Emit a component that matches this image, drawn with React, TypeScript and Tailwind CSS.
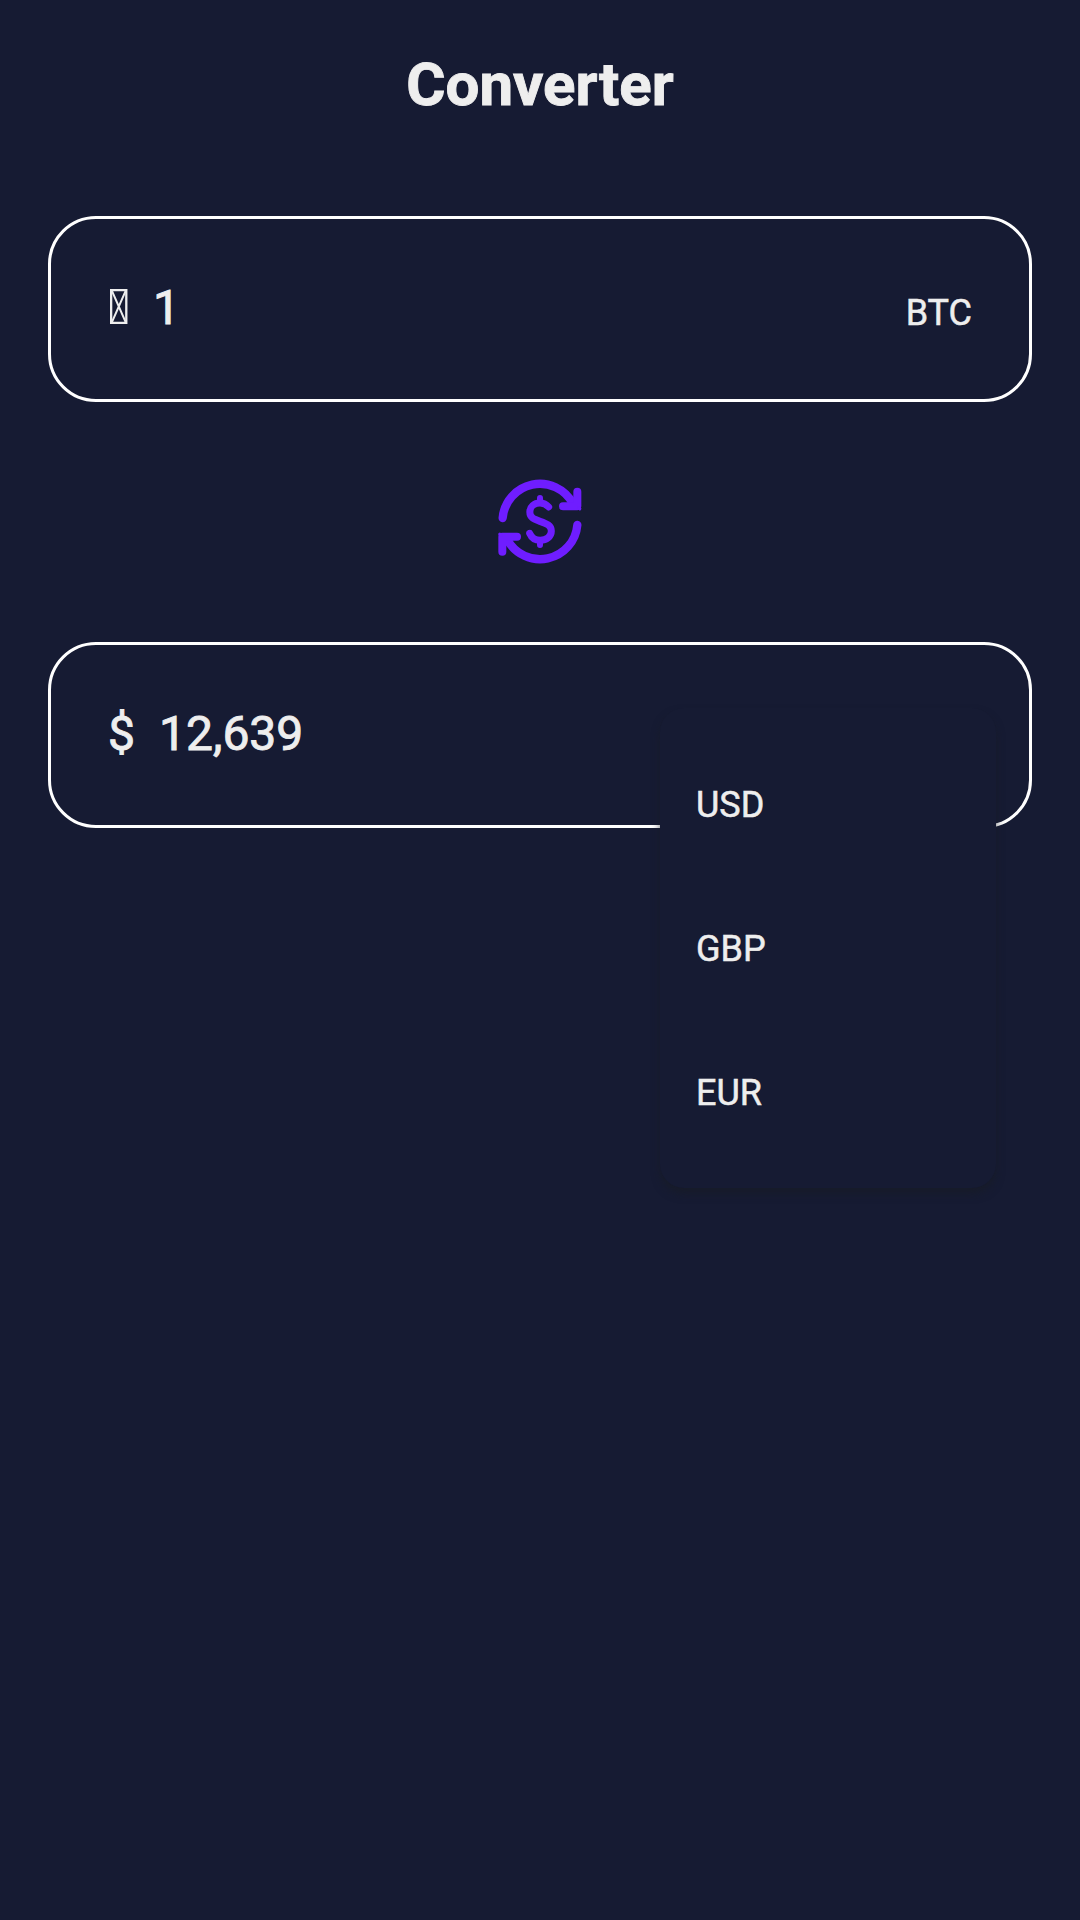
import React from "react";

const currencies = ["USD", "GBP", "EUR"];

function ConvertIcon() {
  return (
    <svg
      viewBox="0 0 360 330"
      className="-mt-[4px] h-[110px] w-[120px]"
      fill="none"
      stroke="#6f1dff"
      strokeLinecap="round"
      strokeLinejoin="round"
    >
      <g strokeWidth="25">
        <path d="M68 159A112 112 0 0 1 278 115" />
        <path d="M292 180A112 112 0 0 1 82 224" />
      </g>
      <g strokeWidth="24">
        <path d="M292 80V124H249" />
        <path d="M67 260V215H111" />
      </g>
      <path d="M296 128l3.5 3.5M63 211l-3.5 -3.5" strokeWidth="9" />
      <path
        d="M206 126C198 117 190 114 180 114C162 114 149.5 125 149.5 141C149.5 157 160 162 180 169C200 176 214 181 214 198C214 215 199 226 181 226C167 226 155 219 149 205"
        strokeWidth="21"
      />
      <path d="M180 99V112M180 228V240" strokeWidth="18" />
    </svg>
  );
}

function MissingGlyph() {
  return (
    <svg viewBox="0 0 18 35" className="h-[35px] w-[18px]" fill="none" stroke="#eeeeee">
      <path d="M1.15 1.15H16.3V33.85H1.15Z" strokeWidth="2.3" />
      <path d="M2 2L15.6 33M15.6 2L2 33" strokeWidth="1.9" />
    </svg>
  );
}

function Field({ children }: { children: React.ReactNode }) {
  return (
    <div className="relative flex h-[186px] items-center rounded-[48px] border-[3px] border-white px-[57px]">
      {children}
    </div>
  );
}

export default function App() {
  return (
    <main className="flex h-[1920px] w-[1080px] flex-col bg-[#161b33] px-12 font-['Roboto',sans-serif] text-[#eeeeee] [-webkit-text-stroke:0.5px_#eeeeee]">
      <h1 className="h-[120px] pt-[49px] text-center text-[60px] leading-[72px] font-bold [-webkit-text-stroke:0.9px_#eeeeee]">
        Converter
      </h1>
      <div className="mt-24">
        <Field>
          <span className="-mt-[5px] ml-[2px]">
            <MissingGlyph />
          </span>
          <span className="-mt-[3px] ml-[25px] text-[48px] leading-[56px] [-webkit-text-stroke:0.9px_#eeeeee]">
            1
          </span>
          <span className="ml-auto pt-[7px] text-[36px] leading-[42px]">BTC</span>
        </Field>
      </div>
      <div className="flex h-[240px] items-center justify-center">
        <ConvertIcon />
      </div>
      <Field>
        <div className="-mt-[3px] flex gap-6 text-[48px] leading-[56px] [-webkit-text-stroke:0.9px_#eeeeee]">
          <span>$</span>
          <span>12,639</span>
        </div>
        <ul className="absolute top-[63px] right-[33px] w-[336px] rounded-[24px] bg-[#161b33] pt-[25px] pb-[23px] shadow-[0_6px_10px_-1px_rgba(24,27,38,0.8)]">
          {currencies.map((code) => (
            <li key={code} className="flex h-36 items-center px-9 text-[36px] leading-[42px]">
              {code}
            </li>
          ))}
        </ul>
      </Field>
    </main>
  );
}
